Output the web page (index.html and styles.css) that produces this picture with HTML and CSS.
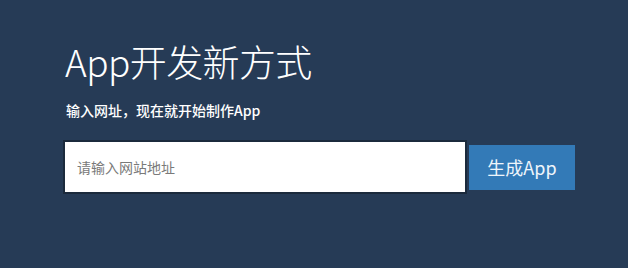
FILE: index.html
```html
<!DOCTYPE html>
<html lang="zh-CN">
<head>
<meta charset="utf-8">
<link rel="stylesheet" href="styles.css">
</head>
<body>
<div class="hero">
  <h1 class="title">App开发新方式</h1>
  <p class="subtitle">输入网址，现在就开始制作App</p>
  <div class="form">
    <input class="url" type="text" placeholder="请输入网站地址">
    <button class="go" type="button">生成App</button>
  </div>
</div>
</body>
</html>
```
FILE: styles.css
```css
html, body {
  margin: 0;
  padding: 0;
}
body {
  background: #263b56;
  width: 628px;
  height: 268px;
  overflow: hidden;
  font-family: "Noto Sans CJK SC", "Noto Sans", sans-serif;
}
.hero {
  padding: 36px 0 0 63px;
}
.title {
  margin: 0 0 0 2px;
  font-size: 37px;
  font-weight: 300;
  line-height: 50px;
  color: #ffffff;
  letter-spacing: -0.6px;
}
.subtitle {
  margin: 14px 0 0 3px;
  font-size: 14px;
  font-weight: 500;
  line-height: 20px;
  color: #ffffff;
}
.form {
  margin-top: 20px;
  display: flex;
  align-items: center;
  gap: 2px;
}
.url {
  box-sizing: border-box;
  width: 404px;
  height: 54px;
  border: 2px solid #1b2a3c;
  background: #ffffff;
  padding: 0 0 0 12px;
  font-family: inherit;
  font-size: 14px;
  color: #333;
  outline: none;
}
.url::placeholder {
  color: #7a7a7a;
}
.go {
  width: 106px;
  height: 45px;
  border: none;
  background: #337ab7;
  color: #eef5fb;
  font-family: inherit;
  font-size: 18px;
  padding: 0;
}
```
